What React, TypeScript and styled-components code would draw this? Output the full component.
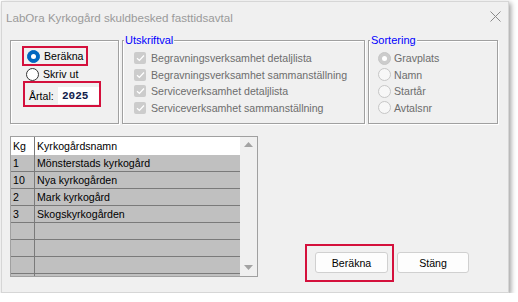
import React from "react";
import styled, { createGlobalStyle } from "styled-components";

const Global = createGlobalStyle`
  html, body { margin: 0; padding: 0; background: #ffffff; }
  body { font-family: "Liberation Sans", Arial, sans-serif; }
  * { box-sizing: border-box; }
`;

const Window = styled.div`
  margin: 1px 0 0 1px;
  width: 508px;
  height: 292px;
  background: #f0f0f0;
  border: 1px solid #d6d6d6;
  box-shadow: 2px 2px 5px rgba(0, 0, 0, 0.38);
  display: flex;
  flex-direction: column;
  font-size: 10.6px;
  color: #000;
`;

const TitleBar = styled.div`
  height: 29px;
  display: flex;
  align-items: center;
  justify-content: space-between;
  padding: 0 7px 0 4px;
  flex: none;
`;

const Title = styled.div`
  font-size: 11.6px;
  color: #9a9a9a;
  padding-top: 1px;
`;

const Content = styled.div`
  padding: 9px 0 0 8px;
  display: flex;
  flex-direction: column;
`;

const TopRow = styled.div`
  display: flex;
  align-items: flex-start;
  gap: 3px;
`;

const Group = styled.div<{ $w: number; $pl: number }>`
  position: relative;
  width: ${(p) => p.$w}px;
  height: 84px;
  border: 1px solid #a0a0a0;
  box-shadow: inset 1px 1px 0 #ffffff, 1px 1px 0 #ffffff;
  padding: 9px 0 0 ${(p) => p.$pl}px;
  display: flex;
  flex-direction: column;
`;

const ModeGroup = styled(Group)`
  padding-top: 5px;
`;

const Legend = styled.span`
  position: absolute;
  top: -7px;
  left: 1px;
  padding: 0 1px 0 1px;
  background: #f0f0f0;
  color: #0000ff;
  font-size: 11px;
  line-height: 12px;
`;

const Highlight = styled.div<{ $pad: string }>`
  border: 2px solid #d4103c;
  padding: ${(p) => p.$pad};
  align-self: flex-start;
  display: flex;
  align-items: center;
`;

const OptionRow = styled.div<{ $h?: number; $gap?: number; $disabled?: boolean }>`
  height: ${(p) => p.$h ?? 16.5}px;
  display: flex;
  align-items: center;
  gap: ${(p) => p.$gap ?? 4}px;
  color: ${(p) => (p.$disabled ? "#6d6d6d" : "#000")};
  white-space: nowrap;
`;

const PlainRow = styled(OptionRow)`
  margin: 1px 0 0 4px;
`;

const RadioDot = styled.span<{ $checked?: boolean; $disabled?: boolean }>`
  width: 13px;
  height: 13px;
  border-radius: 50%;
  flex: none;
  display: flex;
  align-items: center;
  justify-content: center;
  border: ${(p) =>
    p.$disabled
      ? "1px solid #c6c6c6"
      : p.$checked
      ? "1px solid #0067c0"
      : "1px solid #333333"};
  background: ${(p) =>
    p.$disabled
      ? p.$checked
        ? "#cccccc"
        : "#f7f7f7"
      : p.$checked
      ? "#0067c0"
      : "#ffffff"};
  &::after {
    content: "";
    display: ${(p) => (p.$checked ? "block" : "none")};
    width: 5px;
    height: 5px;
    border-radius: 50%;
    background: #ffffff;
  }
`;

const CheckBox = styled.span`
  width: 12px;
  height: 12px;
  border-radius: 2px;
  background: #cccccc;
  flex: none;
  display: flex;
  align-items: center;
  justify-content: center;
`;

const YearBox = styled(Highlight)`
  width: 78px;
  height: 26px;
  align-items: flex-start;
  margin-left: 1px;
`;

const YearLabel = styled.span`
  margin-top: 3px;
`;

const YearInput = styled.div`
  margin-left: auto;
  width: 41px;
  height: 17px;
  background: #ffffff;
  font-family: "Liberation Mono", "Courier New", monospace;
  font-weight: bold;
  font-size: 11px;
  color: #10204a;
  padding-left: 4px;
  display: flex;
  align-items: center;
`;

const BottomRow = styled.div`
  display: flex;
  align-items: flex-start;
  margin-top: 12px;
`;

const Table = styled.div`
  width: 248px;
  height: 141px;
  border: 1px solid #a0a0a0;
  display: flex;
  overflow: hidden;
  flex: none;
`;

const GridArea = styled.div`
  flex: 1;
  display: flex;
  flex-direction: column;
  overflow: hidden;
  background: #c0c0c0;
`;

const GridRow = styled.div<{ $header?: boolean }>`
  flex: none;
  height: ${(p) => (p.$header ? 18 : 17)}px;
  display: grid;
  grid-template-columns: 24px 1fr;
  background: ${(p) => (p.$header ? "#ffffff" : "#c0c0c0")};
  border-bottom: ${(p) => (p.$header ? "none" : "1px solid #7a7a7a")};
`;

const Cell = styled.div<{ $first?: boolean }>`
  padding-left: 2px;
  display: flex;
  align-items: center;
  white-space: nowrap;
  border-right: ${(p) => (p.$first ? "1px solid #7a7a7a" : "none")};
`;

const ScrollBar = styled.div`
  width: 17px;
  flex: none;
  background: #f0f0f0;
  display: flex;
  flex-direction: column;
  justify-content: space-between;
  align-items: center;
  padding: 5px 0 6px 0;
`;

const ButtonArea = styled.div`
  display: flex;
  align-items: flex-start;
  padding: 108px 0 0 47px;
`;

const ButtonHighlight = styled.div`
  border: 2px solid #d4103c;
  padding: 6px 4px 7px 8px;
`;

const Button = styled.button<{ $w?: number; $ml?: number; $mt?: number }>`
  width: ${(p) => p.$w ?? 73}px;
  height: 21px;
  margin: ${(p) => p.$mt ?? 0}px 0 0 ${(p) => p.$ml ?? 0}px;
  border: 1px solid #d0d0d0;
  border-radius: 3px;
  background: #fdfdfd;
  font-family: "Liberation Sans", Arial, sans-serif;
  font-size: 10.6px;
  color: #000;
  padding: 0;
  display: flex;
  align-items: center;
  justify-content: center;
`;

const Check = () => (
  <svg width="9" height="8" viewBox="0 0 9 8">
    <path d="M1 4.2 L3.4 6.4 L8 1.5" fill="none" stroke="#ffffff" strokeWidth="1.3" />
  </svg>
);

const CloseIcon = () => (
  <svg width="11" height="11" viewBox="0 0 11 11">
    <path d="M0.5 0.5 L10.5 10.5 M10.5 0.5 L0.5 10.5" stroke="#8a8a8a" strokeWidth="1" />
  </svg>
);

const Arrow = ({ down }: { down?: boolean }) => (
  <svg width="9" height="5" viewBox="0 0 9 5">
    <path d={down ? "M0 0 L9 0 L4.5 5 Z" : "M0 5 L9 5 L4.5 0 Z"} fill="#a3a3a3" />
  </svg>
);

const printOptions = [
  "Begravningsverksamhet detaljlista",
  "Begravningsverksamhet sammanställning",
  "Serviceverksamhet detaljlista",
  "Serviceverksamhet sammanställning",
];

const sortOptions = ["Gravplats", "Namn", "Startår", "Avtalsnr"];

const rows: [string, string][] = [
  ["1", "Mönsterstads kyrkogård"],
  ["10", "Nya kyrkogården"],
  ["2", "Mark kyrkogård"],
  ["3", "Skogskyrkogården"],
  ["", ""],
  ["", ""],
  ["", ""],
  ["", ""],
];

export default function App() {
  return (
    <>
      <Global />
      <Window>
        <TitleBar>
          <Title>LabOra Kyrkogård skuldbesked fasttidsavtal</Title>
          <CloseIcon />
        </TitleBar>
        <Content>
          <TopRow>
            <ModeGroup $w={109} $pl={11}>
              <Highlight $pad="0 3px 0 3px">
                <OptionRow $h={16}>
                  <RadioDot $checked />
                  <span>Beräkna</span>
                </OptionRow>
              </Highlight>
              <PlainRow $h={14}>
                <RadioDot />
                <span>Skriv ut</span>
              </PlainRow>
              <YearBox $pad="4px 0 1px 4px">
                <YearLabel>Årtal:</YearLabel>
                <YearInput>2025</YearInput>
              </YearBox>
            </ModeGroup>
            <Group $w={243} $pl={11}>
              <Legend>Utskriftval</Legend>
              {printOptions.map((o) => (
                <OptionRow key={o} $gap={5} $disabled>
                  <CheckBox>
                    <Check />
                  </CheckBox>
                  <span>{o}</span>
                </OptionRow>
              ))}
            </Group>
            <Group $w={130} $pl={9}>
              <Legend>Sortering</Legend>
              {sortOptions.map((o, i) => (
                <OptionRow key={o} $gap={3} $disabled>
                  <RadioDot $disabled $checked={i === 0} />
                  <span>{o}</span>
                </OptionRow>
              ))}
            </Group>
          </TopRow>
          <BottomRow>
            <Table>
              <GridArea>
                <GridRow $header>
                  <Cell $first>Kg</Cell>
                  <Cell>Kyrkogårdsnamn</Cell>
                </GridRow>
                {rows.map(([kg, name], i) => (
                  <GridRow key={i}>
                    <Cell $first>{kg}</Cell>
                    <Cell>{name}</Cell>
                  </GridRow>
                ))}
              </GridArea>
              <ScrollBar>
                <Arrow />
                <Arrow down />
              </ScrollBar>
            </Table>
            <ButtonArea>
              <ButtonHighlight>
                <Button>Beräkna</Button>
              </ButtonHighlight>
              <Button $w={72} $ml={3} $mt={8}>
                Stäng
              </Button>
            </ButtonArea>
          </BottomRow>
        </Content>
      </Window>
    </>
  );
}
